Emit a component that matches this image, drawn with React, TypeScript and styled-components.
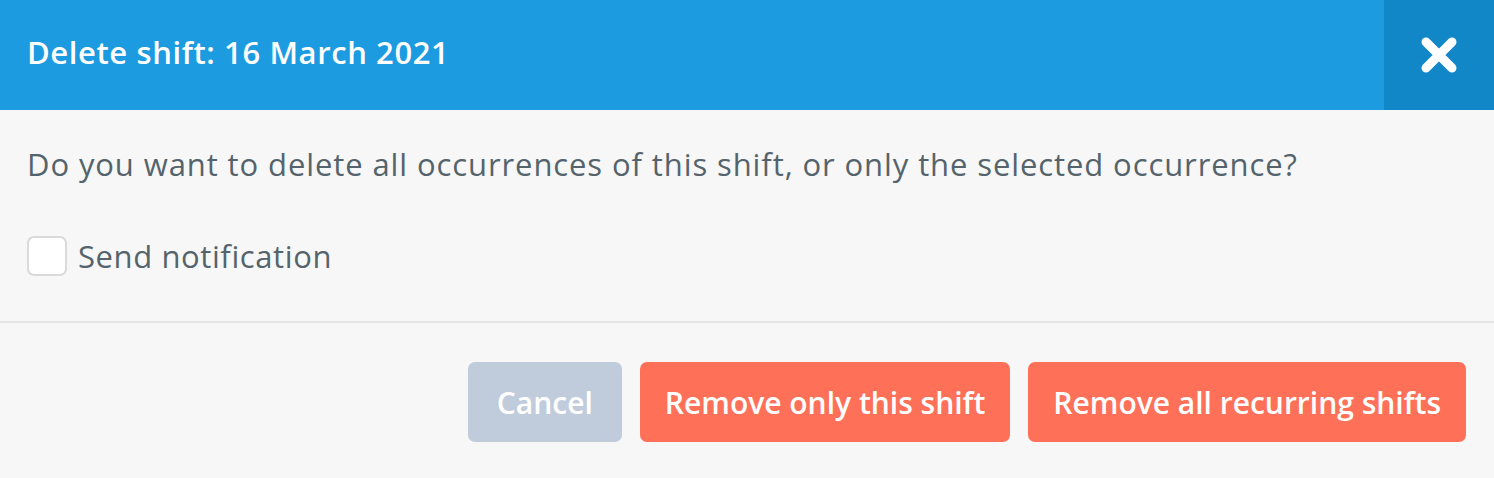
import React from "react";
import styled, { createGlobalStyle } from "styled-components";

const Global = createGlobalStyle`
  html, body { margin: 0; padding: 0; background: #f7f7f7; }
  body { font-family: "Open Sans", Lato, sans-serif; }
  * { box-sizing: border-box; }
`;

const Dialog = styled.div`
  width: 1494px;
  height: 478px;
  display: flex;
  flex-direction: column;
  background: #f7f7f7;
`;

const Header = styled.header`
  height: 110px;
  display: flex;
  align-items: stretch;
  background: #1c9be1;
`;

const Title = styled.h1`
  flex: 1;
  margin: 0;
  padding-left: 27px;
  display: flex;
  align-items: center;
  font-size: 31px;
  font-weight: 600;
  color: #ffffff;
  letter-spacing: 0.6px;
  padding-bottom: 6px;
`;

const CloseButton = styled.button`
  width: 110px;
  border: none;
  padding: 0;
  background: #1187c8;
  display: flex;
  align-items: center;
  justify-content: center;
  cursor: pointer;
`;

const Body = styled.div`
  padding: 34px 27px 0;
  display: flex;
  flex-direction: column;
`;

const Question = styled.p`
  margin: 0;
  font-size: 31px;
  line-height: 40px;
  letter-spacing: 0.9px;
  color: #55646c;
`;

const CheckRow = styled.label`
  margin-top: 52px;
  display: flex;
  align-items: center;
  gap: 11px;
  font-size: 31px;
  letter-spacing: 0.6px;
  color: #55646c;
  height: 40px;
`;

const Box = styled.span`
  width: 40px;
  height: 40px;
  border-radius: 7px;
  border: 2px solid #dadada;
  background: #ffffff;
`;

const Divider = styled.hr`
  margin: 45px 0 0;
  border: none;
  border-top: 2px solid #e4e4e4;
`;

const Footer = styled.div`
  display: flex;
  justify-content: flex-end;
  gap: 18px;
  padding: 39px 28px 0;
`;

const Btn = styled.button<{ $variant: "muted" | "danger" }>`
  height: 80px;
  min-width: 154px;
  padding: 0 25px;
  border: none;
  border-radius: 7px;
  font-family: "Open Sans", Lato, sans-serif;
  font-size: 30px;
  font-weight: 600;
  color: #ffffff;
  background: ${(p) => (p.$variant === "muted" ? "#c0ccdc" : "#ff7059")};
  cursor: pointer;
`;

export default function App() {
  return (
    <>
      <Global />
      <Dialog>
        <Header>
          <Title>Delete shift: 16 March 2021</Title>
          <CloseButton aria-label="Close">
            <svg width="40" height="40" viewBox="0 0 40 40">
              <path d="M7 7 L33 33 M33 7 L7 33" stroke="#fff" strokeWidth="9" strokeLinecap="round" fill="none" />
            </svg>
          </CloseButton>
        </Header>
        <Body>
          <Question>Do you want to delete all occurrences of this shift, or only the selected occurrence?</Question>
          <CheckRow>
            <Box />
            Send notification
          </CheckRow>
        </Body>
        <Divider />
        <Footer>
          <Btn $variant="muted">Cancel</Btn>
          <Btn $variant="danger">Remove only this shift</Btn>
          <Btn $variant="danger">Remove all recurring shifts</Btn>
        </Footer>
      </Dialog>
    </>
  );
}
